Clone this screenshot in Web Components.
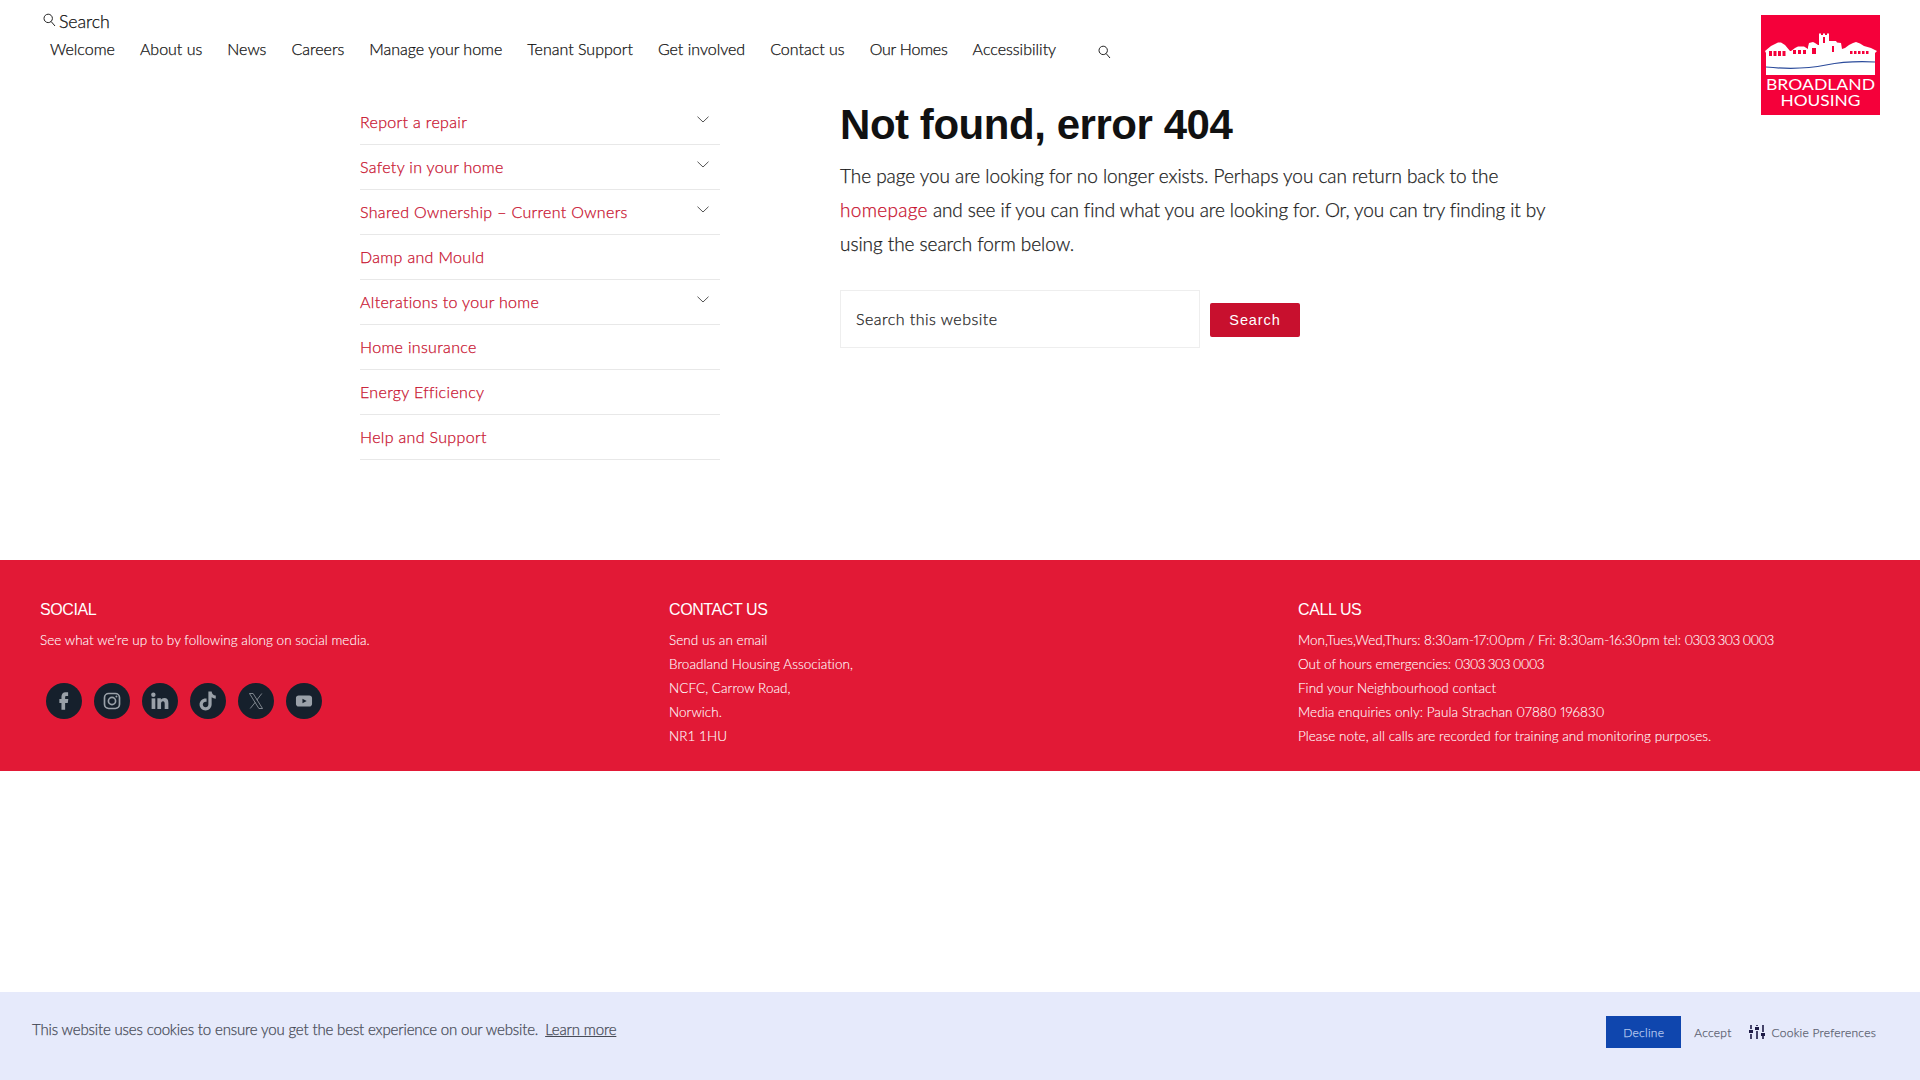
<!DOCTYPE html>
<html lang="en"><head><meta charset="utf-8"><title>Not found, error 404</title>
<style>
html,body{margin:0;padding:0;background:#fff;font-family:Lato,"Liberation Sans",sans-serif;font-weight:300;color:#222;-webkit-text-stroke:.25px currentColor}
site-page{display:block;height:1080px;overflow:hidden}
</style></head><body>
<site-page>
  <site-header></site-header>
  <page-body>
    <side-menu>
      <menu-row arrow>Report a repair</menu-row>
      <menu-row arrow>Safety in your home</menu-row>
      <menu-row arrow>Shared Ownership – Current Owners</menu-row>
      <menu-row>Damp and Mould</menu-row>
      <menu-row arrow>Alterations to your home</menu-row>
      <menu-row>Home insurance</menu-row>
      <menu-row>Energy Efficiency</menu-row>
      <menu-row>Help and Support</menu-row>
    </side-menu>
    <not-found></not-found>
  </page-body>
  <site-footer></site-footer>
  <cookie-bar></cookie-bar>
</site-page>
<script>
const def=(name,html,init)=>customElements.define(name,class extends HTMLElement{constructor(){super();this.attachShadow({mode:'open'}).innerHTML=html;}connectedCallback(){init&&init(this)}});
const mag='<svg width="13" height="14" viewBox="0 0 13 14" fill="none" stroke="#222" stroke-width="1"><circle cx="5.2" cy="5.4" r="4.200"/><path d="M8 8.400l4 4.600"/></svg>';

def('brand-logo',`<style>:host{display:block;width:119px;height:100px;-webkit-text-stroke:0}svg{display:block}text{font-family:Lato,"Liberation Sans",sans-serif;fill:#fff;font-weight:400}</style>
<svg width="119" height="100" viewBox="0 0 119 100">
<rect width="119" height="100" fill="#f5003a"/>
<path fill="#fff" d="M4 36 L10 31 L14 29 L17 27.500 L20 27.500 L24 30 L29 36 L30 36 L34 33 L37 31.500 L43 31.500 L47 34 L47 32 L48 28 L52 27 L54 28 L57 30 L58 30 L58 18.500 L60 18.500 L60 20 L62 20 L62 18.500 L64 18.500 L64 20 L66 20 L66 18.500 L68 18.500 L68 26 L75 26 L76 27.500 L80 28 L81 34 L84 33 L88 30 L92 28 L95 27 L99 28.500 L103 31 L110 33 L116 36 L114 38 L114 60 L5 60 L5 38 Z"/>
<path fill="none" stroke="#2b4b9b" stroke-width="1.2" d="M5 52 C25 54 45 54 65 50 C80 47 95 46 114 47"/>
<g fill="#f5003a"><rect x="8" y="36" width="3" height="5"/><rect x="12.500" y="36" width="3" height="5"/><rect x="17" y="36" width="3" height="5"/><rect x="21.500" y="36" width="3" height="5"/><rect x="32" y="35" width="3" height="4"/><rect x="37" y="35" width="3" height="4"/><rect x="42" y="35" width="3" height="4"/><rect x="62" y="22" width="2" height="6"/><rect x="71" y="31" width="2" height="6"/><rect x="51" y="33" width="4" height="6"/><rect x="89" y="36" width="2.500" height="3"/><rect x="93" y="36" width="2.500" height="3"/><rect x="97" y="36" width="2.500" height="3"/><rect x="101" y="36" width="2.500" height="3"/><rect x="105" y="36" width="2.500" height="3"/></g>
<text x="59.500" y="75" text-anchor="middle" font-size="15.200" textLength="109" lengthAdjust="spacingAndGlyphs">BROADLAND</text>
<text x="59.500" y="91" text-anchor="middle" font-size="15.200" textLength="80" lengthAdjust="spacingAndGlyphs">HOUSING</text>
</svg>`);

def('site-header',`<style>
:host{display:flex;justify-content:space-between;height:100px;color:#111;font-size:16px}
.left{padding:11px 0 0 43px}
.top{display:flex;align-items:center;gap:3px;height:20px;font-size:17.800px;letter-spacing:-.1px}
nav{display:flex;align-items:center;gap:25px;margin:7px 0 0 7px;height:20px;letter-spacing:0}
nav svg{margin:8px 0 0 17px;display:block}
.top svg{display:block;margin-top:-2px}
brand-logo{margin:15px 40px 0 0}
</style>
<div class="left"><div class="top">${mag}<span>Search</span></div>
<nav><span>Welcome</span><span>About us</span><span>News</span><span>Careers</span><span>Manage your home</span><span>Tenant Support</span><span>Get involved</span><span>Contact us</span><span style="letter-spacing:-.2px">Our Homes</span><span>Accessibility</span>${mag}</nav></div>
<brand-logo></brand-logo>`);

def('page-body',`<style>:host{display:flex;gap:120px;padding-left:360px;height:460px}</style><slot></slot>`);
def('side-menu',`<style>:host{display:block;width:360px}</style><slot></slot>`);
def('menu-row',`<style>
:host{display:flex;justify-content:space-between;box-sizing:border-box;height:45px;border-bottom:1px solid #e8e8e8;align-items:center;color:#c8102e;font-size:16px;letter-spacing:.33px;padding-bottom:2px}
svg{display:none;margin:-4px 11px 0 0}
:host([arrow]) svg{display:block}
</style><span><slot></slot></span><svg width="12" height="7" viewBox="0 0 12 7" fill="none" stroke="#555" stroke-width="1"><path d="M.5.700L6 6l5.500-5.300"/></svg>`);

def('not-found',`<style>
:host{display:block;width:720px}
h1{font:700 42px/1 "Liberation Sans",Arial,sans-serif;color:#111;margin:4px 0 13px;letter-spacing:-.45px;-webkit-text-stroke:0}
p{margin:0;font-size:19px;line-height:34px;color:#1c1c1c;letter-spacing:-.05px}
a{color:#c8102e;text-decoration:none;letter-spacing:.3px}
.r{letter-spacing:-.09px}
form{display:flex;align-items:center;gap:10px;margin-top:29px}
.inp{box-sizing:border-box;width:360px;height:58px;border:1px solid #eee;display:flex;align-items:center;padding:0 0 2px 15px;font-size:16px;letter-spacing:.47px;color:#1c1c1c}
.btn{box-sizing:border-box;width:90px;height:34px;margin-top:2px;background:#c8102e;color:#fff;border-radius:2px;display:flex;align-items:center;justify-content:center;font:400 14.500px "Liberation Sans",sans-serif;letter-spacing:.9px;-webkit-text-stroke:0}
</style>
<h1>Not found, error 404</h1>
<p>The page you are looking for no longer exists. Perhaps you can return back to the<br><a>homepage</a><span class="r"> and see if you can find what you are looking for. Or, you can try finding it by</span><br>using the search form below.</p>
<form><div class="inp">Search this website</div><div class="btn">Search</div></form>`);

def('social-icon',`<style>:host{display:flex;width:36px;height:36px;border-radius:50%;background:#16202c;align-items:center;justify-content:center}svg{display:block;width:20px;height:20px;overflow:visible}</style><svg viewBox="0 0 24 24"></svg>`,el=>{el.shadowRoot.querySelector('svg').innerHTML=el.getAttribute('d')});

const ic={
fb:'<path transform="translate(12 12) scale(1.05 1.2) translate(-12.300 -13.150)" fill="#9aa1a9" d="M14 8.200h3V4.300h-3c-2.800 0-4.600 1.900-4.600 4.600v2.300H7v3.900h2.400V22h4.200v-6.900h3l.6-3.900h-3.600V9.200c0-.6.300-1 1-1z"/>',
ig:'<g fill="none" stroke="#9aa1a9" stroke-width="2"><rect x="3" y="3" width="18" height="18" rx="5"/><circle cx="12" cy="12" r="4.300"/></g><circle cx="17.300" cy="6.700" r="1.200" fill="#9aa1a9"/>',
li:'<g fill="#9aa1a9" transform="translate(12 12) scale(1.060) translate(-12.500 -12)"><circle cx="5" cy="5" r="2.500"/><rect x="3" y="9" width="4.200" height="12"/><path d="M9.500 9h4v1.700c.7-1.200 2.100-2 3.800-2 3.400 0 4.700 2.100 4.700 5.500V21h-4.200v-6c0-1.600-.5-2.700-1.900-2.700-1.500 0-2.200 1.100-2.200 2.700v6H9.500z"/></g>',
tt:'<path transform="translate(12 12) scale(1.150) translate(-12.100 -12)" fill="#9aa1a9" d="M12.500 2h3.400c.2 2.400 1.700 4 4.300 4.300v3.300c-1.600 0-3-.5-4.300-1.400v7.100c0 3.800-2.900 6.500-6.300 6.500-3.500 0-6.300-2.800-6.300-6.200 0-3.700 3.200-6.700 7.300-6.200v3.500c-2.100-.5-3.900 1-3.900 2.800 0 1.600 1.300 2.900 2.900 2.900 1.700 0 2.900-1.200 2.900-3.100z"/>',
x:'<g transform="translate(12 12) scale(.87 1) translate(-12 -12)" fill="none" stroke="#9aa1a9" stroke-width="1"><path d="M3 3h5l13 18h-5z"/><path d="M20 3l-7 8M11 13.500L4 21"/></g>',
yt:'<path transform="translate(12 12) scale(.92 .88) translate(-12 -12)" fill="#9aa1a9" fill-rule="evenodd" d="M5 4.500h14c2 0 3.500 1.500 3.500 3.500v8c0 2-1.500 3.500-3.500 3.500H5c-2 0-3.500-1.500-3.500-3.500V8C1.500 6 3 4.500 5 4.500zM10 8.800v6.400l5.500-3.200z"/>'};

def('site-footer',`<style>
:host{display:grid;grid-template-columns:629px 629px 1fr;box-sizing:border-box;height:211px;background:#e21936;color:#fff;padding:40px 0 0 40px;font-size:13.500px;line-height:24px;-webkit-text-stroke:.1px currentColor}
h4{margin:0 0 9px;font:400 16px/19px "Liberation Sans",Arial,sans-serif;letter-spacing:-.4px;color:#fff;-webkit-text-stroke:0}
.t{color:#fff;letter-spacing:.04px;font-variant-numeric:proportional-nums}
.m{letter-spacing:-.04px}
.n{letter-spacing:-.75px}
.o{letter-spacing:-.05px}
.pc{font-variant-numeric:tabular-nums}
.soc{display:flex;gap:12px;margin:31px 0 0 6px}
</style>
<section><h4>SOCIAL</h4><div class="t">See what we're up to by following along on social media.</div>
<div class="soc">${['fb','ig','li','tt','x','yt'].map(k=>`<social-icon d='${ic[k]}'></social-icon>`).join('')}</div></section>
<section><h4>CONTACT US</h4><div class="t">Send us an email<br>Broadland Housing Association,<br>NCFC, Carrow Road,<br>Norwich.<br><span class="pc">NR1 1HU</span></div></section>
<section><h4>CALL US</h4><div class="t"><span class="m">Mon,Tues,Wed,Thurs: 8:30am-17:00pm / Fri: 8:30am-16:30pm tel:</span> <span class="n">0303 303 0003</span><br><span class="o">Out of hours emergencies:</span> <span class="n">0303 303 0003</span><br>Find your Neighbourhood contact<br>Media enquiries only: Paula Strachan 07880 196830<br>Please note, all calls are recorded for training and monitoring purposes.</div></section>`);

def('cookie-bar',`<style>
:host{position:fixed;left:0;right:0;bottom:0;height:88px;background:#e6eafb;display:flex;justify-content:space-between;font-size:15px;color:#474b57}
.l{padding:28px 0 0 32px;letter-spacing:-.15px}
.l u{margin-left:3px}
.r{display:flex;align-items:center;padding:0 44px 8px 0;font-size:12px;color:#5b5f70;letter-spacing:.25px}
.d{width:75px;height:32px;background:#0f46ae;color:#b7c8ee;display:flex;align-items:center;justify-content:center;margin-right:13px}
.p{display:flex;align-items:center;gap:7px;margin-left:17px}
svg{display:block}
</style>
<div class="l">This website uses cookies to ensure you get the best experience on our website. <u>Learn more</u></div>
<div class="r"><span class="d">Decline</span><span>Accept</span><span class="p"><svg width="16" height="16" viewBox="0 0 16 16" fill="none" stroke="#1d1a45" stroke-width="1.600"><path d="M2 1v4M2 10v5M8 1v1M8 7v8M14 1v7M14 12v3"/><g fill="#1d1a45" stroke="none"><rect x="0" y="6" width="4" height="3"/><rect x="6" y="3" width="4" height="3"/><rect x="12" y="9" width="4" height="3"/></g></svg>Cookie Preferences</span></div>`);
</script>
</body></html>
